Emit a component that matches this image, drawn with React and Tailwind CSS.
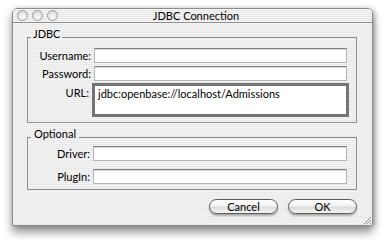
const TEXT_FIELD =
  "h-[15px] flex-1 border border-[#b4b4b4] border-t-[#7e7e7e] bg-white shadow-[inset_0_1px_0_#d6d6d6]";

function Row({ label, labelW, children, className = "" }) {
  return (
    <div className={`flex h-[15px] items-center ${className}`}>
      <span className={`${labelW} shrink-0 pr-[3px] text-right`}>{label}</span>
      {children}
    </div>
  );
}

function TrafficLight() {
  return (
    <div className="h-[11px] w-[11px] rounded-full border border-[#9a9a9a] bg-[radial-gradient(circle_at_50%_70%,#fafafa_0%,#e4e4e4_60%,#cccccc_100%)]" />
  );
}

function AquaButton({ children }) {
  return (
    <button
      type="button"
      className="flex h-[15px] w-[69px] items-center justify-center rounded-full border border-[#5c5c5c] bg-[linear-gradient(180deg,#ffffff_0%,#f2f2f2_45%,#dcdcdc_55%,#f4f4f4_100%)] text-[11px] leading-none text-black shadow-[0_2px_2px_rgba(0,0,0,0.28)]"
    >
      {children}
    </button>
  );
}

export default function App() {
  return (
    <div
      className="h-[250px] w-[391px] bg-white pl-[12px] pt-[8px] text-[11px] leading-[15px] text-black"
      style={{ fontFamily: "Lato, 'Liberation Sans', sans-serif" }}
    >
      <div className="flex h-[218px] w-[361px] flex-col overflow-hidden rounded-t-[5px] border border-[#8c8c8c] bg-[repeating-linear-gradient(180deg,#f4f4f4_0px,#f4f4f4_1px,#e8e8e8_1px,#e8e8e8_2px)] shadow-[0_6px_10px_rgba(0,0,0,0.45),2px_0_4px_rgba(0,0,0,0.2)]">
        <div className="relative flex h-[14px] shrink-0 items-center border-b border-[#8e8e8e] bg-[repeating-linear-gradient(180deg,#f6f6f6_0px,#f6f6f6_1px,#e6e6e6_1px,#e6e6e6_2px)] pl-[4px]">
          <div className="flex gap-[4px]">
            <TrafficLight />
            <TrafficLight />
            <TrafficLight />
          </div>
          <div className="absolute inset-0 flex items-center justify-center pl-[7px] leading-none">
            JDBC Connection
          </div>
        </div>

        <div className="flex flex-col pl-[14px] pr-[15px]">
          <fieldset className="mt-[8px] border border-[#8e8e8e] pb-[5px] pr-[9px]">
            <legend className="relative -top-[3px] ml-[3px] px-[2px] leading-[12px]">JDBC</legend>
            <Row label="Username:" labelW="w-[66px]" className="mt-[5px]">
              <div className={TEXT_FIELD} />
            </Row>
            <Row label="Password:" labelW="w-[66px]" className="mt-[3px]">
              <div className={TEXT_FIELD} />
            </Row>
            <div className="mt-[2px] flex items-start">
              <span className="w-[66px] shrink-0 pr-[5px] pt-[2px] text-right">URL:</span>
              <div className="-mr-[2px] -ml-[2px] h-[34px] flex-1 border-[3px] border-[#747474] bg-white px-[3px] pt-[1px] leading-[14px]">
                jdbc:openbase://localhost/Admissions
              </div>
            </div>
          </fieldset>

          <fieldset className="mt-[8px] border border-[#8e8e8e] pb-[5px] pr-[9px]">
            <legend className="relative -top-[3px] ml-[3px] px-[3px] leading-[12px]">Optional</legend>
            <Row label="Driver:" labelW="w-[65px]" className="mt-[3px]">
              <div className={TEXT_FIELD} />
            </Row>
            <Row label="PlugIn:" labelW="w-[65px]" className="mt-[8px]">
              <div className={TEXT_FIELD} />
            </Row>
          </fieldset>

          <div className="mt-[9px] flex justify-end gap-[10px]">
            <AquaButton>Cancel</AquaButton>
            <AquaButton>OK</AquaButton>
          </div>
        </div>

        <div className="mt-auto flex justify-end pb-[1px] pr-[1px]">
          <svg width="8" height="8" viewBox="0 0 8 8">
            <path d="M1 8 L8 1 M4 8 L8 4 M7 8 L8 7" stroke="#8a8a8a" strokeWidth="1" />
          </svg>
        </div>
      </div>
    </div>
  );
}
